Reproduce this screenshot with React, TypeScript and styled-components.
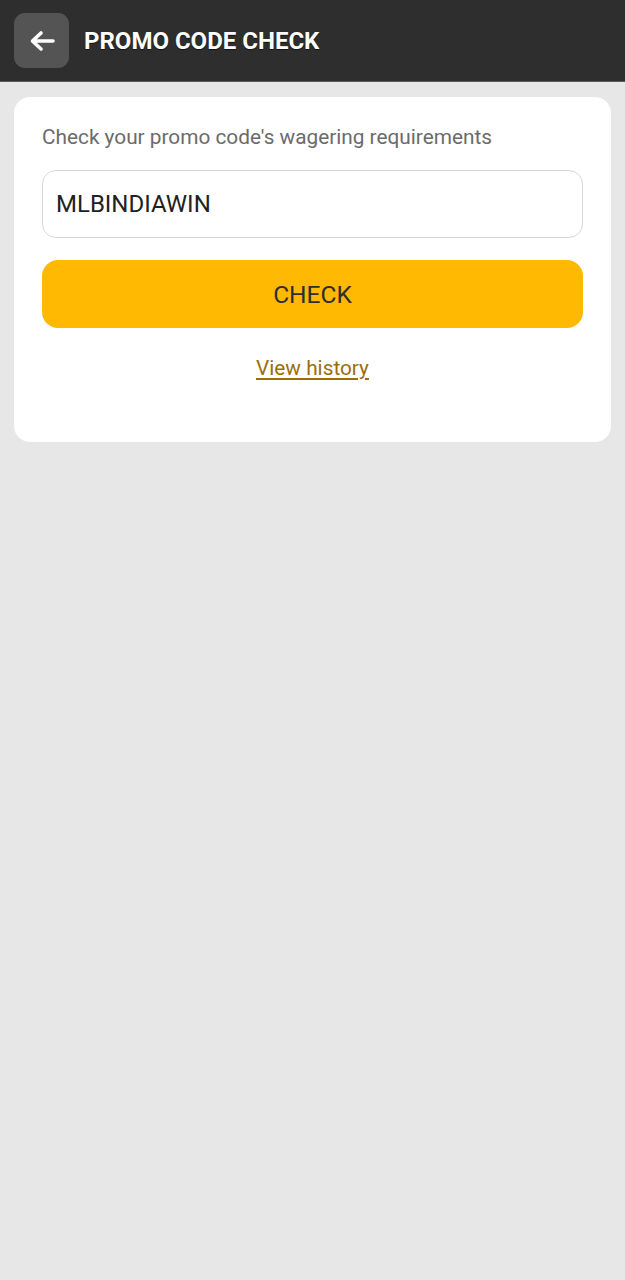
import styled, { createGlobalStyle } from "styled-components";
import { useState } from "react";

const GlobalStyle = createGlobalStyle`
    html, body {
        margin: 0;
        padding: 0;
        background-color: #e7e7e7;
        font-family: Roboto, "Noto Sans", Arial, sans-serif;
    }
`;

const Page = styled.div`
    min-height: 1280px;
    background-color: #e7e7e7;
`;

const Header = styled.header`
    height: 81px;
    background-color: #2e2e2e;
    border-bottom: 1px solid #5a5a5a;
    display: flex;
    align-items: center;
    padding: 0 14px;
    gap: 15px;
`;

const BackButton = styled.button`
    width: 55px;
    height: 55px;
    border: none;
    border-radius: 11px;
    background-color: #545454;
    display: flex;
    align-items: center;
    justify-content: center;
    padding: 0;
    cursor: pointer;
`;

const Title = styled.h1`
    margin: 1px 0 0;
    color: #ffffff;
    font-size: 24px;
    font-weight: 700;
    text-shadow: 0 1px 1px rgba(0, 0, 0, 0.6);
`;

const Content = styled.main`
    padding: 15px 14px;
`;

const Card = styled.section`
    background-color: #ffffff;
    border-radius: 16px;
    padding: 26px 28px 60px;
    display: flex;
    flex-direction: column;
`;

const Subtitle = styled.p`
    margin: 0 0 19px;
    color: #6b6b6b;
    font-size: 20.8px;
    line-height: 28px;
`;

const CodeInput = styled.input`
    box-sizing: border-box;
    width: 100%;
    height: 68px;
    padding: 0 13px;
    border: 1.5px solid #d8d8d8;
    border-radius: 14px;
    font-family: inherit;
    font-size: 24px;
    color: #222222;
    outline: none;
`;

const CheckButton = styled.button`
    margin-top: 22px;
    height: 68px;
    border: none;
    border-radius: 16px;
    background-color: #ffb903;
    color: #2e2e2e;
    font-family: inherit;
    font-size: 24.5px;
    cursor: pointer;
`;

const HistoryLink = styled.a`
    margin-top: 26px;
    align-self: center;
    color: #9a6f0b;
    font-size: 20.8px;
    line-height: 28px;
    text-decoration: underline;
    text-underline-offset: 3px;
    cursor: pointer;
`;

export default function App() {
    const [code, setCode] = useState("MLBINDIAWIN");

    return (
        <Page>
            <GlobalStyle />
            <Header>
                <BackButton aria-label="Back">
                    <svg width="26" height="22" viewBox="0 0 26 22" fill="none">
                        <path
                            d="M24 11H4M12 3L3.5 11L12 19"
                            stroke="#ffffff"
                            strokeWidth="3.6"
                            strokeLinecap="round"
                            strokeLinejoin="round"
                        />
                    </svg>
                </BackButton>
                <Title>PROMO CODE CHECK</Title>
            </Header>
            <Content>
                <Card>
                    <Subtitle>Check your promo code's wagering requirements</Subtitle>
                    <CodeInput value={code} onChange={(e) => setCode(e.target.value)} />
                    <CheckButton>CHECK</CheckButton>
                    <HistoryLink>View history</HistoryLink>
                </Card>
            </Content>
        </Page>
    );
}
